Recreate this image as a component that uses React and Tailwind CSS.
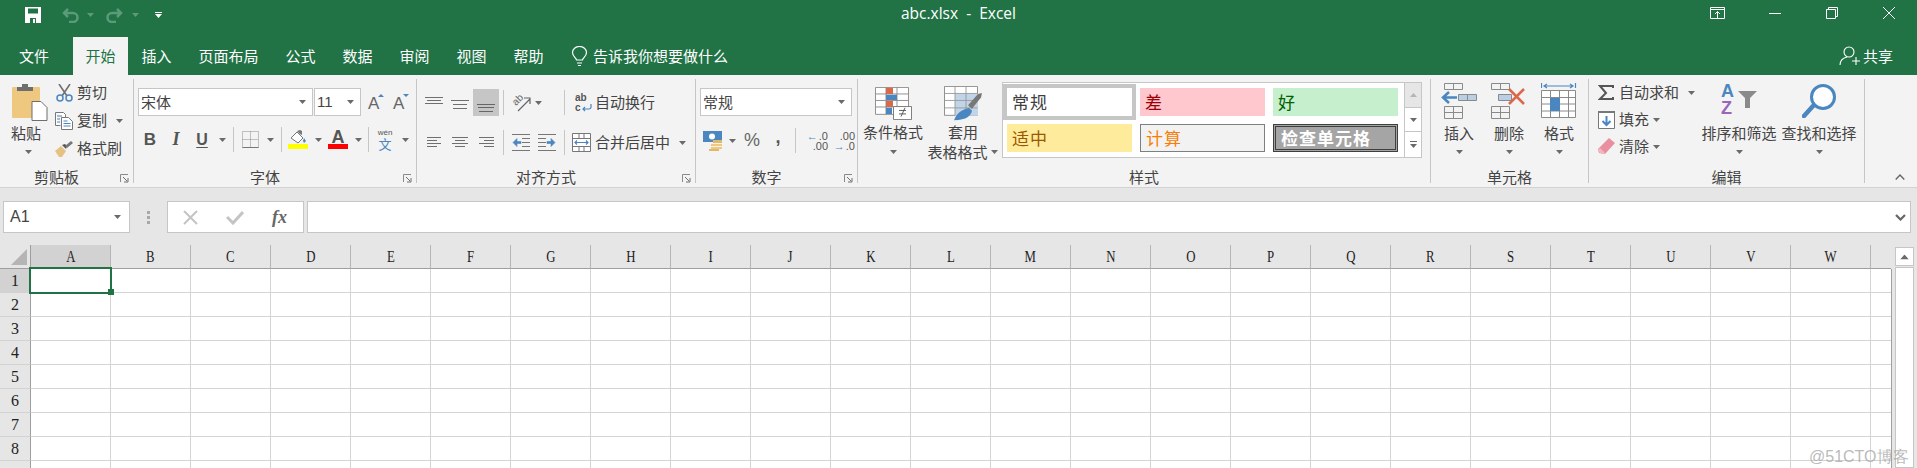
import React from 'react';

const GRAY = '#6a6a6a';
const BLUE = '#4a86c0';
const RED = '#d9694a';
const columns = 'ABCDEFGHIJKLMNOPQRSTUVW'.split('');
const rows = [1, 2, 3, 4, 5, 6, 7, 8, 9];
const tabs = [
  { label: '文件', w: 'w-[68px]' },
  { label: '开始', w: 'w-[55px] ml-[5px]', active: true },
  { label: '插入', w: 'w-[57px]' },
  { label: '页面布局', w: 'w-[87px]' },
  { label: '公式', w: 'w-[57px]' },
  { label: '数据', w: 'w-[57px]' },
  { label: '审阅', w: 'w-[57px]' },
  { label: '视图', w: 'w-[57px]' },
  { label: '帮助', w: 'w-[57px]' },
];

const Caret = ({ className = '', color = GRAY }) => (
  <svg width="7" height="4" viewBox="0 0 7 4" className={`shrink-0 ${className}`}>
    <path d="M0 0h7L3.500 4z" fill={color} />
  </svg>
);

const Sep = ({ className = '' }) => <div className={`w-px h-[25px] bg-[#c6c6c6] shrink-0 ${className}`} />;

const Lines = ({ w = 18, h = 18, items, color = '#6f6f6f' }) => (
  <svg width={w} height={h} viewBox={`0 0 ${w} ${h}`}>
    {items.map(([a, b, y]) => (
      <path key={`${a}-${y}`} d={`M${a} ${y}.5H${b}`} stroke={color} />
    ))}
  </svg>
);

const Launcher = () => (
  <svg width="9" height="9" viewBox="0 0 9 9">
    <path d="M.5 8V.5H8" fill="none" stroke="#8a8a8a" />
    <path d="M3 3l4 4M8 4v4H4" fill="none" stroke="#6f6f6f" />
  </svg>
);

const Group = ({ w, label, launcher, children }) => (
  <div className={`${w} h-[104px] mt-[4px] border-r border-[#c6c6c6] shrink-0 flex flex-col`}>
    <div className="h-[84px] shrink-0">{children}</div>
    <div className="h-[28px] shrink-0 flex items-center">
      <span className="flex-1 text-center text-[15px] leading-[20px] text-[#444]">{label}</span>
      {launcher && (
        <span className="w-[20px] flex justify-end pr-[4px] mt-[3px]"><Launcher /></span>
      )}
    </div>
  </div>
);

const SaveIcon = () => (
  <svg width="16" height="16" viewBox="0 0 16 16">
    <path d="M0 0h16v16H0z" fill="#fff" />
    <path d="M3 1.500h10v5H3zM5 11h6v5H5z" fill="#217346" />
    <path d="M8 12h2v4H8z" fill="#fff" />
  </svg>
);

const UndoIcon = ({ flip }) => (
  <svg width="17" height="15" viewBox="0 0 17 15" className={flip ? '-scale-x-100' : ''}>
    <path d="M2 5h9a4.500 4.500 0 0 1 0 9H7M6 1L2 5l4 4" fill="none" stroke="#5b9b7a" strokeWidth="2.500" />
  </svg>
);

const PasteIcon = () => (
  <svg width="36" height="38" viewBox="0 0 36 38">
    <rect x="0" y="4" width="28" height="31" rx="1" fill="#edc87e" />
    <path d="M5 8V4h5V1h6v3h5v4z" fill="#6e6e6e" />
    <path d="M20 18.500h9l6 6v13H20z" fill="#fff" stroke="#6e6e6e" />
  </svg>
);

const ScissorsIcon = () => (
  <svg width="17" height="18" viewBox="0 0 17 18">
    <path d="M3 0l8 12M14 0L6 12" stroke="#6f6f6f" strokeWidth="1.600" />
    <circle cx="4" cy="14" r="3" fill="none" stroke={BLUE} strokeWidth="1.500" />
    <circle cx="13" cy="14" r="3" fill="none" stroke={BLUE} strokeWidth="1.500" />
  </svg>
);

const CopyIcon = () => (
  <svg width="18" height="18" viewBox="0 0 18 18">
    <path d="M.5.500h8l2 2v3M.5.500v13h5" fill="#fff" stroke="#777" />
    <path d="M6.500 5.500h7l4 4v8h-11z" fill="#fff" stroke="#777" />
    <path d="M2 4h5M2 7h3M2 10h3M8.500 9h4M8.500 11.500h7M8.500 14h7" stroke={BLUE} />
  </svg>
);

const BrushIcon = () => (
  <svg width="18" height="16" viewBox="0 0 18 16">
    <path d="M0 10l6-5 5 5-4 6H4z" fill="#e6c184" />
    <path d="M7 4l3-1 2 2-1 3z" fill="#555" />
    <path d="M10 5l6-5 2 2-6 5z" fill="#777" />
  </svg>
);

const FontSize = ({ small }) => (
  <div className="relative w-[16px] h-[20px] flex items-end font-['Liberation_Sans'] text-[17px] leading-[17px] text-[#666]">
    A
    <svg width="6" height="3" viewBox="0 0 6 3" className="absolute right-0 top-[2px]">
      <path d={small ? 'M0 0h6L3 3z' : 'M0 3l3-3 3 3z'} fill={BLUE} />
    </svg>
  </div>
);

const BordersIcon = () => (
  <svg width="17" height="17" viewBox="0 0 17 17">
    <path d="M.5.500h16v16H.5zM8.500.500v16M.5 8.500h16" fill="none" stroke="#8c8c8c" strokeDasharray="1 1" />
    <path d="M.5 16.500h16" stroke="#777" />
  </svg>
);

const FillIcon = () => (
  <div className="flex flex-col items-center">
    <svg width="20" height="14" viewBox="0 0 20 14">
      <path d="M3 8l6-6 6 6-5 5z" fill="#fff" stroke="#777" />
      <path d="M9 1l3-1 2 1v4l-2-1z" fill="#777" />
      <path d="M16 8l2 3-2 2-1-2z" fill={BLUE} />
    </svg>
    <div className="w-[20px] h-[5px] bg-[#ffff00]" />
  </div>
);

const FontColorIcon = () => (
  <div className="flex flex-col items-center">
    <span className="font-['Liberation_Sans'] text-[18px] leading-[15px] font-bold text-[#555] h-[14px]">A</span>
    <div className="w-[20px] h-[5px] bg-[#ff0000]" />
  </div>
);

const WenIcon = () => (
  <div className="flex flex-col items-center leading-none">
    <span className="font-['Liberation_Sans'] text-[8px] leading-[9px] text-[#555]">wén</span>
    <span className="text-[13px] leading-[14px] text-[#4a86c0]">文</span>
  </div>
);

const OrientIcon = () => (
  <div className="relative w-[19px] h-[18px]">
    <span className="absolute left-[0px] top-[0px] -rotate-45 font-['Liberation_Sans'] text-[10px] leading-[11px] text-[#666]">ab</span>
    <svg width="19" height="18" viewBox="0 0 19 18" className="absolute left-0 top-0">
      <path d="M6 17L18 5M12 4h6v6" fill="none" stroke="#666" strokeWidth="1.200" />
    </svg>
  </div>
);

const WrapIcon = () => (
  <div className="relative w-[17px] h-[20px] font-['Liberation_Sans'] font-bold text-[10px] leading-[10px] text-[#555]">
    <div>ab</div>
    <div>c</div>
    <svg width="10" height="9" viewBox="0 0 10 9" className="absolute right-0 bottom-0">
      <path d="M9 0v3a2 2 0 0 1-2 2H1M3 3L1 5l2 2" fill="none" stroke={BLUE} strokeWidth="1.200" />
    </svg>
  </div>
);

const IndentIcon = ({ flip }) => (
  <svg width="18" height="17" viewBox="0 0 18 17" className={flip ? '-scale-x-100' : ''}>
    <path d="M0 .5h18M10 4.500h8M10 8.500h8M10 12.500h8M0 16.500h18" stroke="#777" />
    <path d="M1 8.500l4-4v3h4v2H5v3z" fill={BLUE} stroke={BLUE} strokeWidth=".6" />
  </svg>
);

const MergeIcon = () => (
  <svg width="19" height="19" viewBox="0 0 19 19">
    <path d="M.5.500h18v18H.5zM.5 5.500h18M.5 13.500h18M7 .5v5M12 .5v5M7 13.500v5M12 13.500v5" fill="#fff" stroke="#777" />
    <path d="M3 9.500h13M5 7.500l-2 2 2 2M14 7.500l2 2-2 2" fill="none" stroke={BLUE} strokeWidth="1.200" />
  </svg>
);

const CurrencyIcon = () => (
  <svg width="20" height="20" viewBox="0 0 20 20">
    <path d="M0 0h19v11H0z" fill={BLUE} />
    <ellipse cx="9" cy="5.500" rx="3" ry="3" fill="#fff" />
    <path d="M8 13h11v2H8zM8 16h11v2H8z" fill="#edc87e" />
    <path d="M6 18h10v2H6zM10 9h9v3h-9z" fill="#e0b868" />
  </svg>
);

const DecimalIcon = ({ inc }) => (
  <div className="w-[24px] flex flex-col font-['Liberation_Sans'] text-[11px] leading-[10px] text-[#555] items-end">
    {inc ? (
      <>
        <span className="flex items-center"><span className="text-[#4a86c0] font-bold mr-[1px]">←</span>.0</span>
        <span>.00</span>
      </>
    ) : (
      <>
        <span>.00</span>
        <span className="flex items-center"><span className="text-[#4a86c0] font-bold mr-[1px]">→</span>.0</span>
      </>
    )}
  </div>
);

const ConditionalIcon = () => (
  <svg width="37" height="33" viewBox="0 0 37 38" preserveAspectRatio="none">
    <path d="M.5.500h33v31H.5zM.5 8h33M.5 15.500h33M.5 23h33M11 .5v31M22 .5v31" fill="#fff" stroke="#8a8a8a" />
    <path d="M11 1h7v7h-7zM11 16h7v7h-7z" fill={RED} />
    <path d="M11 9h11v6H11zM11 24h6v7h-6z" fill={BLUE} />
    <path d="M18.500 22.500h18v15h-18z" fill="#fff" stroke="#777" />
    <path d="M24 27h7M24 31h7M26 34l4-10" stroke="#555" />
  </svg>
);

const TableStyleIcon = () => (
  <svg width="38" height="35" viewBox="0 0 38 40" preserveAspectRatio="none">
    <path d="M.5.500h33v33H.5z" fill="#fff" stroke="#8a8a8a" />
    <path d="M11 9h23v25H11z" fill="#c2d5e8" />
    <path d="M.5 8.500h33M.5 16.500h33M.5 25h33M11 .5v33M22 .5v33" fill="none" stroke="#9a9a9a" />
    <path d="M24 22l10-13 4-1-1 5-9 13z" fill="#777" />
    <path d="M10 39c2-6 6-12 15-14l3 3c-1 6-5 11-18 11z" fill={BLUE} />
  </svg>
);

const InsertIcon = () => (
  <svg width="36" height="36" viewBox="0 0 36 36">
    <path d="M3.500.500h18v6h-18zM12.500.500v6M3.500 23.500h18v12h-18zM3.500 29.500h18M12.500 23.500v12" fill="none" stroke="#8a8a8a" />
    <path d="M17.500 11.500h18v6h-18z" fill="#b9cfe6" stroke="#8a8a8a" />
    <path d="M26.500 11.500v6" stroke="#8a8a8a" />
    <path d="M16 14.500H3M8 9l-6 5.500L8 20" fill="none" stroke={BLUE} strokeWidth="2.500" />
  </svg>
);

const DeleteIcon = () => (
  <svg width="36" height="36" viewBox="0 0 36 36">
    <path d="M.5.500h18v6H.5zM9.500.500v6M.5 23.500h18v12H.5zM.5 29.500h18M9.500 23.500v12M7.500 11.500h7" fill="none" stroke="#8a8a8a" />
    <path d="M7.500 11.500h13v6h-13z" fill="#b9cfe6" stroke="#8a8a8a" />
    <path d="M18 6l15 15M33 6L18 21" stroke={RED} strokeWidth="2.500" />
  </svg>
);

const FormatIcon = () => (
  <svg width="36" height="37" viewBox="0 0 36 37">
    <path d="M.5 0v5M34.500 0v5M3 3h29M6 1L3 3l3 2M29 1l3 2-3 2" fill="none" stroke={BLUE} strokeWidth="1.200" />
    <path d="M.5 7.500h34v27H.5zM.5 14.500h34M.5 21h34M.5 28h34M9.500 7.500v27M18.500 7.500v27M27.500 7.500v27" fill="#fff" stroke="#8a8a8a" />
    <path d="M9 15h10v13H9z" fill={BLUE} />
  </svg>
);

const SumIcon = () => (
  <svg width="16" height="16" viewBox="0 0 16 16">
    <path d="M15 3V1H2l6 7-6 6h13v-2" fill="none" stroke="#555" strokeWidth="2" />
  </svg>
);

const FillDownIcon = () => (
  <svg width="17" height="18" viewBox="0 0 17 18">
    <path d="M.5.500h16v17H.5z" fill="#fff" stroke="#777" />
    <path d="M0 0h17v2H0z" fill="#777" />
    <path d="M8.500 5v9M4.500 10l4 4 4-4" fill="none" stroke={BLUE} strokeWidth="2" />
  </svg>
);

const EraserIcon = () => (
  <svg width="17" height="17" viewBox="0 0 17 17">
    <path d="M11 0l6 5-10 11-6-1-1-4z" fill="#e98fa0" />
    <path d="M2 10l5 5-1 1-4-1-2-3z" fill="#f3b6c0" />
  </svg>
);

const SortIcon = () => (
  <div className="relative w-[36px] h-[33px] font-['Liberation_Sans'] font-bold text-[18px] leading-[16px]">
    <div className="text-[#4a86c0]">A</div>
    <div className="text-[#9a66bb] mt-[1px]">Z</div>
    <svg width="19" height="17" viewBox="0 0 19 17" className="absolute right-0 top-[8px]">
      <path d="M0 0h19l-7 7v10H7V7z" fill="#8a8a8a" />
    </svg>
  </div>
);

const FindIcon = () => (
  <svg width="35" height="35" viewBox="0 0 35 35">
    <circle cx="21" cy="14" r="11.500" fill="#fff" stroke={BLUE} strokeWidth="3" />
    <path d="M2 33l9-10" stroke={BLUE} strokeWidth="4.500" strokeLinecap="round" />
  </svg>
);

const BigButton = ({ w = 'w-[50px]', icon, label }) => (
  <div className={`${w} flex flex-col items-center shrink-0`}>
    <div className="h-[43px] pt-[4px] flex items-start justify-center">{icon}</div>
    <span className="text-[15px] leading-[22px] text-[#444] whitespace-nowrap">{label}</span>
    <Caret className="mt-[6px]" />
  </div>
);

const SmallRow = ({ icon, label, caretClass, h = 'h-[27px]', iconBox = 'w-[20px]' }) => (
  <div className={`${h} flex items-center text-[15px] text-[#444] whitespace-nowrap`}>
    <div className={`${iconBox} flex justify-center`}>{icon}</div>
    <span className="ml-[3px]">{label}</span>
    {caretClass && <Caret className={caretClass} />}
  </div>
);

const StyleCell = ({ label, className }) => (
  <div className={`flex items-center pl-[5px] text-[17px] tracking-[1px] ${className}`}>{label}</div>
);

const Select = ({ label, w, font = '' }) => (
  <div className={`${w} h-[28px] bg-white border border-[#c6c6c6] flex items-center justify-between pl-[2px] pr-[6px] shrink-0`}>
    <span className={`text-[15px] ${font} text-[#444]`}>{label}</span>
    <Caret />
  </div>
);

const Ribbon = () => (
  <div className="h-[113px] bg-[#f3f3f3] border-b border-[#d2d2d2] flex">
    <Group w="w-[134px]" label="剪贴板" launcher>
      <div className="flex">
        <div className="w-[55px] pl-[12px] flex flex-col items-start">
          <div className="mt-[4px]"><PasteIcon /></div>
          <span className="-ml-[1px] -mt-[2px] text-[15px] leading-[28px] text-[#444]">粘贴</span>
          <Caret className="ml-[13px] mt-[3px]" />
        </div>
        <div className="flex flex-col -ml-[1px]">
          <SmallRow icon={<ScissorsIcon />} label="剪切" />
          <SmallRow icon={<CopyIcon />} label="复制" caretClass="ml-[9px]" h="h-[29px]" />
          <SmallRow icon={<BrushIcon />} label="格式刷" />
        </div>
      </div>
    </Group>

    <Group w="w-[283px]" label="字体" launcher>
      <div className="flex flex-col">
        <div className="flex mt-[9px] pl-[4px] items-center">
          <Select label="宋体" w="w-[175px]" />
          <Select label="11" w="w-[47px] ml-[1px]" font="font-['Liberation_Sans']" />
          <div className="ml-[7px] flex"><FontSize /></div>
          <div className="ml-[9px] flex"><FontSize small /></div>
        </div>
        <div className="flex mt-[11px] pl-[3px] h-[25px] items-center">
          <span className="w-[26px] text-center font-['Liberation_Sans'] font-bold text-[17px] text-[#555]">B</span>
          <span className="w-[26px] text-center font-['Liberation_Serif'] italic font-bold text-[18px] text-[#555]">I</span>
          <span className="w-[26px] text-center font-['Liberation_Sans'] font-bold text-[16px] text-[#555] underline underline-offset-2">U</span>
          <span className="w-[14px] flex justify-center"><Caret /></span>
          <Sep className="ml-[4px]" />
          <span className="w-[32px] flex justify-center"><BordersIcon /></span>
          <span className="w-[8px] flex justify-center"><Caret /></span>
          <Sep className="ml-[7px]" />
          <span className="w-[32px] flex justify-center"><FillIcon /></span>
          <span className="w-[8px] flex justify-center"><Caret /></span>
          <span className="w-[32px] flex justify-center"><FontColorIcon /></span>
          <span className="w-[8px] flex justify-center"><Caret /></span>
          <Sep className="ml-[6px]" />
          <span className="w-[32px] flex justify-center"><WenIcon /></span>
          <span className="w-[8px] flex justify-center"><Caret /></span>
        </div>
      </div>
    </Group>

    <Group w="w-[279px]" label="对齐方式" launcher>
      <div className="flex flex-col pl-[4px]">
        <div className="flex h-[27px] mt-[10px] items-center">
          <span className="w-[26px] flex justify-center"><Lines items={[[0, 18, 3], [2, 16, 6], [0, 18, 9]]} /></span>
          <span className="w-[26px] flex justify-center"><Lines items={[[0, 18, 6], [2, 16, 10], [2, 16, 14]]} /></span>
          <span className="w-[26px] h-[27px] bg-[#c6c6c6] flex justify-center items-end pb-[2px]"><Lines items={[[0, 18, 8], [1, 17, 11], [2, 16, 15]]} color="#666" /></span>
          <Sep className="ml-[4px]" />
          <span className="ml-[8px] flex"><OrientIcon /></span>
          <Caret className="ml-[4px]" />
          <Sep className="ml-[22px]" />
          <span className="ml-[10px] flex"><WrapIcon /></span>
          <span className="ml-[3px] text-[15px] text-[#444]">自动换行</span>
        </div>
        <div className="flex h-[25px] mt-[14px] items-center">
          <span className="w-[26px] flex justify-center"><Lines w={14} h={13} items={[[0, 14, 1], [0, 10, 4], [0, 14, 7], [0, 10, 10]]} /></span>
          <span className="w-[26px] flex justify-center"><Lines w={16} h={13} items={[[0, 16, 1], [3, 13, 4], [0, 16, 7], [3, 13, 10]]} /></span>
          <span className="w-[26px] flex justify-center"><Lines w={15} h={13} items={[[0, 15, 1], [5, 15, 4], [0, 15, 7], [5, 15, 10]]} /></span>
          <Sep className="ml-[4px]" />
          <span className="ml-[8px] flex"><IndentIcon /></span>
          <span className="ml-[8px] flex"><IndentIcon flip /></span>
          <Sep className="ml-[8px]" />
          <span className="ml-[7px] flex"><MergeIcon /></span>
          <span className="ml-[4px] text-[15px] text-[#444]">合并后居中</span>
          <Caret className="ml-[9px]" />
        </div>
      </div>
    </Group>

    <Group w="w-[162px]" label="数字" launcher>
      <div className="flex flex-col">
        <div className="mt-[9px] pl-[4px]"><Select label="常规" w="w-[152px]" /></div>
        <div className="flex h-[25px] mt-[12px] items-center pl-[7px]">
          <CurrencyIcon />
          <Caret className="ml-[6px]" />
          <span className="w-[32px] text-center font-['Liberation_Sans'] text-[18px] text-[#666]">%</span>
          <span className="w-[20px] h-[25px] text-center font-['Liberation_Sans'] font-bold text-[18px] leading-[18px] text-[#555]">,</span>
          <Sep className="ml-[7px]" />
          <span className="ml-[8px]"><DecimalIcon inc /></span>
          <span className="ml-[3px]"><DecimalIcon /></span>
        </div>
      </div>
    </Group>

    <Group w="w-[573px]" label="样式">
      <div className="flex">
        <div className="w-[70px] flex flex-col items-center shrink-0">
          <div className="mt-[8px] h-[33px]"><ConditionalIcon /></div>
          <span className="text-[15px] leading-[24px] text-[#444] whitespace-nowrap">条件格式</span>
          <Caret className="mt-[6px]" />
        </div>
        <div className="w-[70px] flex flex-col items-center shrink-0">
          <div className="mt-[7px] h-[35px]"><TableStyleIcon /></div>
          <span className="text-[15px] leading-[22px] text-[#444]">套用</span>
          <div className="flex items-center whitespace-nowrap -ml-[1px] leading-[18px]">
            <span className="text-[15px] text-[#444]">表格格式</span>
            <Caret className="ml-[3px]" />
          </div>
        </div>
        <div className="w-[420px] h-[76px] mt-[3px] ml-[4px] flex border border-[#c6c6c6] bg-white">
          <div className="w-[401px] grid grid-cols-[125px_125px_125px] grid-rows-[28px_28px] gap-x-[8px] gap-y-[8px] pl-[4px] pt-[5px]">
            <StyleCell label="常规" className="bg-white text-[#3f3f3f] outline-[4px] outline-[#c6c6c6]" />
            <StyleCell label="差" className="bg-[#ffc7ce] text-[#9c0006]" />
            <StyleCell label="好" className="bg-[#c6efce] text-[#006100]" />
            <StyleCell label="适中" className="bg-[#ffeb9c] text-[#9c5700]" />
            <StyleCell label="计算" className="bg-[#f2f2f2] text-[#fa7d00] border border-[#7f7f7f]" />
            <StyleCell label="检查单元格" className="bg-[#a5a5a5] text-white border-[3px] border-double border-[#3f3f3f] font-bold" />
          </div>
          <div className="flex-1 flex flex-col border-l border-[#c6c6c6]">
            <div className="h-[25px] bg-[#e6e6e6] border-b border-[#c6c6c6] flex items-center justify-center"><Caret className="rotate-180" color="#b5b5b5" /></div>
            <div className="h-[24px] border-b border-[#c6c6c6] flex items-center justify-center"><Caret /></div>
            <div className="flex-1 flex flex-col items-center justify-center gap-[2px]">
              <div className="w-[7px] h-px bg-[#6a6a6a]" />
              <Caret />
            </div>
          </div>
        </div>
      </div>
    </Group>

    <Group w="w-[158px]" label="单元格">
      <div className="flex pl-[3px]">
        <BigButton icon={<InsertIcon />} label="插入" />
        <BigButton icon={<DeleteIcon />} label="删除" />
        <BigButton icon={<FormatIcon />} label="格式" />
      </div>
    </Group>

    <Group w="w-[276px]" label="编辑">
      <div className="flex">
        <div className="w-[110px] pl-[7px] flex flex-col shrink-0">
          <SmallRow icon={<SumIcon />} label="自动求和" caretClass="ml-[9px]" />
          <SmallRow icon={<FillDownIcon />} label="填充" caretClass="ml-[4px]" />
          <SmallRow icon={<EraserIcon />} label="清除" caretClass="ml-[4px]" />
        </div>
        <BigButton w="w-[80px]" icon={<SortIcon />} label="排序和筛选" />
        <BigButton w="w-[80px]" icon={<FindIcon />} label="查找和选择" />
      </div>
    </Group>

    <div className="flex-1 flex justify-end items-end pb-[7px] pr-[12px]">
      <svg width="10" height="6" viewBox="0 0 10 6">
        <path d="M.7 5.500L5 1l4.300 4.500" fill="none" stroke="#666" strokeWidth="1.400" />
      </svg>
    </div>
  </div>
);

const FormulaBar = () => (
  <div className="h-[57px] bg-[#e6e6e6] pt-[13px] flex items-start">
    <div className="ml-[3px] w-[127px] h-[32px] bg-white border border-[#c6c6c6] flex items-center justify-between pl-[6px] pr-[8px] shrink-0">
      <span className="font-['Liberation_Sans'] text-[16px] text-[#444]">A1</span>
      <Caret />
    </div>
    <div className="w-[37px] h-[32px] flex flex-col items-center justify-center gap-[2px] shrink-0">
      <div className="w-[3px] h-[3px] bg-[#a8a8a8]" />
      <div className="w-[3px] h-[3px] bg-[#a8a8a8]" />
      <div className="w-[3px] h-[3px] bg-[#a8a8a8]" />
    </div>
    <div className="w-[137px] h-[32px] bg-white border border-[#c6c6c6] flex items-center shrink-0">
      <svg width="15" height="15" viewBox="0 0 15 15" className="ml-[15px]">
        <path d="M1 1l13 13M14 1L1 14" stroke="#c4c4c4" strokeWidth="2" />
      </svg>
      <svg width="18" height="15" viewBox="0 0 18 15" className="ml-[28px]">
        <path d="M1 7l6 6L17 2" fill="none" stroke="#c4c4c4" strokeWidth="3" />
      </svg>
      <span className="ml-[28px] font-['Liberation_Serif'] italic font-bold text-[18px] text-[#666]">fx</span>
    </div>
    <div className="ml-[3px] w-[1604px] h-[32px] bg-white border border-[#c6c6c6] flex items-center justify-end pr-[4px] shrink-0">
      <svg width="11" height="7" viewBox="0 0 11 7">
        <path d="M1 1l4.500 4.500L10 1" fill="none" stroke="#666" strokeWidth="2.200" />
      </svg>
    </div>
  </div>
);

const Sheet = () => (
  <div className="relative h-[223px] bg-[#e6e6e6] overflow-hidden">
    <div className="flex h-[24px]">
      <div className="w-[31px] border-r border-b border-[#9e9e9e] flex items-end justify-end pr-[3px] pb-[3px] shrink-0">
        <svg width="16" height="16" viewBox="0 0 16 16">
          <path d="M16 0v16H0z" fill="#b5b5b5" />
        </svg>
      </div>
      {columns.map((col) => (
        <div
          key={col}
          className={`w-[80px] border-r border-r-[#b5b5b5] border-b border-b-[#9e9e9e] flex items-center justify-center font-['Liberation_Serif'] text-[16px] text-[#222] shrink-0 ${col === 'A' ? 'bg-[#d2d2d2]' : ''}`}
        >
          <span className="inline-block scale-x-[0.8]">{col}</span>
        </div>
      ))}
      <div className="w-[20px] border-b border-[#9e9e9e] shrink-0" />
    </div>
    <div className="w-[1892px]">
      {rows.map((row) => (
        <div key={row} className="flex h-[24px]">
          <div className={`w-[31px] border-r border-r-[#9e9e9e] border-b border-b-[#d2d2d2] flex items-center justify-center font-['Liberation_Serif'] text-[16px] text-[#222] shrink-0 ${row === 1 ? 'bg-[#d2d2d2]' : ''}`}>
            {row < 9 && row}
          </div>
          <div className="flex-1 flex bg-white border-r border-[#a0a0a0]">
            {columns.map((col) => (
              <div key={col} className="w-[80px] border-r border-b border-[#d4d4d4] shrink-0" />
            ))}
            <div className="flex-1 border-b border-[#d4d4d4]" />
          </div>
        </div>
      ))}
    </div>
    <div className="absolute left-[29px] top-[22px] w-[83px] h-[27px] border-2 border-[#217346]" />
    <div className="absolute left-[108px] top-[44px] w-[6px] h-[6px] bg-[#217346]" />
    <div className="absolute left-[1895px] top-[2px] bottom-0 w-[19px] flex flex-col">
      <div className="h-[19px] bg-white border border-[#c6c6c6] flex items-center justify-center">
        <Caret className="rotate-180 scale-125" />
      </div>
      <div className="flex-1 bg-white border border-[#c6c6c6] mt-[1px]" />
    </div>
    <div className="absolute left-[1809px] top-[202px] text-[16px] leading-[20px] text-[#a8a8a8]/80 font-['Liberation_Sans'] whitespace-nowrap">@51CTO博客</div>
  </div>
);

export default function App() {
  return (
    <div className="w-[1917px] h-[468px] overflow-hidden bg-[#e6e6e6] font-['Noto_Sans_CJK_SC',sans-serif]">
      <div className="h-[37px] bg-[#217346] grid grid-cols-[1fr_auto_1fr] items-start">
        <div className="flex items-center pt-[7px] pl-[25px]">
          <SaveIcon />
          <span className="ml-[21px] flex"><UndoIcon /></span>
          <Caret className="ml-[8px]" color="#5b9b7a" />
          <span className="ml-[12px] flex"><UndoIcon flip /></span>
          <Caret className="ml-[9px]" color="#5b9b7a" />
          <div className="ml-[16px] flex flex-col items-center gap-[1px]">
            <div className="w-[7px] h-px bg-white" />
            <Caret color="#fff" />
          </div>
        </div>
        <div className="pt-[2px] text-[15.500px] leading-[22px] text-white font-['Open_Sans'] whitespace-pre">abc.xlsx  -  Excel</div>
        <div className="flex justify-end pt-[7px] h-[24px]">
          <div className="w-[57px] flex justify-center">
            <svg width="15" height="12" viewBox="0 0 15 12">
              <path d="M.5.500h14v11H.5zM.5 2.500h14M7.500 11V5M5 7l2.500-2.500L10 7" fill="none" stroke="#fff" />
            </svg>
          </div>
          <div className="w-[57px] flex justify-center">
            <svg width="12" height="12" viewBox="0 0 12 12"><path d="M0 6.500h12" stroke="#fff" /></svg>
          </div>
          <div className="w-[57px] flex justify-center">
            <svg width="12" height="12" viewBox="0 0 12 12">
              <path d="M.5 2.500h9v9h-9zM2.500 2.500v-2h9v9h-2" fill="none" stroke="#fff" />
            </svg>
          </div>
          <div className="w-[57px] flex justify-center">
            <svg width="12" height="12" viewBox="0 0 12 12"><path d="M0 0l12 12M12 0L0 12" stroke="#fff" /></svg>
          </div>
        </div>
      </div>

      <div className="h-[38px] bg-[#217346] flex items-stretch">
        {tabs.map((tab) => (
          <div
            key={tab.label}
            className={`${tab.w} flex items-center justify-center text-[15px] shrink-0 ${tab.active ? 'bg-[#f3f3f3] text-[#217346]' : 'text-white'}`}
          >
            {tab.label}
          </div>
        ))}
        <div className="ml-[14px] flex items-center text-white">
          <svg width="17" height="20" viewBox="0 0 17 20">
            <path d="M5.500 14c0-2-4-3.500-4-7.500a7 6 0 0 1 14 0c0 4-4 5.500-4 7.500zM6 17h5M7 19.500h3" fill="none" stroke="#fff" strokeWidth="1.200" />
          </svg>
          <span className="ml-[5px] text-[15px] whitespace-nowrap">告诉我你想要做什么</span>
        </div>
        <div className="ml-auto pr-[24px] flex items-center text-white">
          <svg width="24" height="20" viewBox="0 0 24 20">
            <circle cx="10" cy="6" r="5" fill="none" stroke="#fff" strokeWidth="1.100" />
            <path d="M1 19c0-4 3-7 7-8M17 11v8M13 15h8" fill="none" stroke="#fff" strokeWidth="1.100" />
          </svg>
          <span className="text-[15px]">共享</span>
        </div>
      </div>

      <Ribbon />
      <FormulaBar />
      <Sheet />
    </div>
  );
}
